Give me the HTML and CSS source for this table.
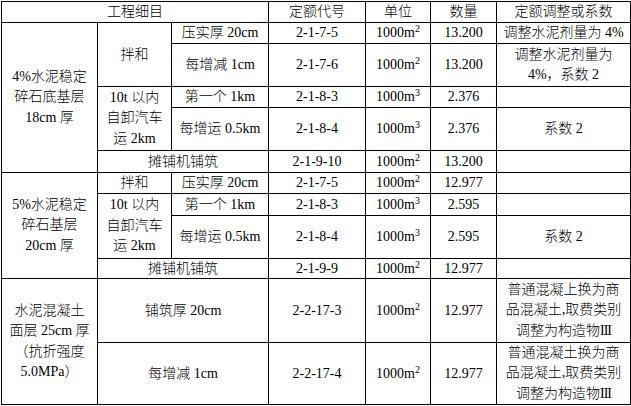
FILE: index.html
```html
<!DOCTYPE html>
<html lang="zh-CN">
<head>
<meta charset="utf-8">
<title>工程细目</title>
<link rel="stylesheet" href="styles.css">
</head>
<body>
<div class="sheet">
  <div class="c span-c3"><span>工程细目</span></div>
  <div class="c"><span>定额代号</span></div>
  <div class="c"><span>单位</span></div>
  <div class="c"><span>数量</span></div>
  <div class="c"><span>定额调整或系数</span></div>

  <div class="c span-r5 multi"><span>4%水泥稳定<br>碎石底基层<br>18cm 厚</span></div>
  <div class="c span-r2"><span>拌和</span></div>
  <div class="c"><span>压实厚 20cm</span></div>
  <div class="c"><span>2-1-7-5</span></div>
  <div class="c"><span>1000m<sup>2</sup></span></div>
  <div class="c"><span>13.200</span></div>
  <div class="c"><span>调整水泥剂量为 4%</span></div>

  <div class="c"><span>每增减 1cm</span></div>
  <div class="c"><span>2-1-7-6</span></div>
  <div class="c"><span>1000m<sup>2</sup></span></div>
  <div class="c"><span>13.200</span></div>
  <div class="c multi"><span>调整水泥剂量为<br>4%，系数 2</span></div>

  <div class="c span-r2 multi"><span>10t 以内<br>自卸汽车<br>运 2km</span></div>
  <div class="c"><span>第一个 1km</span></div>
  <div class="c"><span>2-1-8-3</span></div>
  <div class="c"><span>1000m<sup>3</sup></span></div>
  <div class="c"><span>2.376</span></div>
  <div class="c"></div>

  <div class="c"><span>每增运 0.5km</span></div>
  <div class="c"><span>2-1-8-4</span></div>
  <div class="c"><span>1000m<sup>3</sup></span></div>
  <div class="c"><span>2.376</span></div>
  <div class="c"><span>系数 2</span></div>

  <div class="c span-c2"><span>摊铺机铺筑</span></div>
  <div class="c"><span>2-1-9-10</span></div>
  <div class="c"><span>1000m<sup>2</sup></span></div>
  <div class="c"><span>13.200</span></div>
  <div class="c"></div>

  <div class="c span-r4 multi"><span>5%水泥稳定<br>碎石基层<br>20cm 厚</span></div>
  <div class="c"><span>拌和</span></div>
  <div class="c"><span>压实厚 20cm</span></div>
  <div class="c"><span>2-1-7-5</span></div>
  <div class="c"><span>1000m<sup>2</sup></span></div>
  <div class="c"><span>12.977</span></div>
  <div class="c"></div>

  <div class="c span-r2 multi"><span>10t 以内<br>自卸汽车<br>运 2km</span></div>
  <div class="c"><span>第一个 1km</span></div>
  <div class="c"><span>2-1-8-3</span></div>
  <div class="c"><span>1000m<sup>3</sup></span></div>
  <div class="c"><span>2.595</span></div>
  <div class="c"></div>

  <div class="c"><span>每增运 0.5km</span></div>
  <div class="c"><span>2-1-8-4</span></div>
  <div class="c"><span>1000m<sup>3</sup></span></div>
  <div class="c"><span>2.595</span></div>
  <div class="c"><span>系数 2</span></div>

  <div class="c span-c2"><span>摊铺机铺筑</span></div>
  <div class="c"><span>2-1-9-9</span></div>
  <div class="c"><span>1000m<sup>2</sup></span></div>
  <div class="c"><span>12.977</span></div>
  <div class="c"></div>

  <div class="c span-r2 multi"><span>水泥混凝土<br>面层 25cm 厚<br>（抗折强度<br>5.0MPa）</span></div>
  <div class="c span-c2"><span>铺筑厚 20cm</span></div>
  <div class="c"><span>2-2-17-3</span></div>
  <div class="c"><span>1000m<sup>2</sup></span></div>
  <div class="c"><span>12.977</span></div>
  <div class="c multi"><span>普通混凝上换为商<br>品混凝土,取费类别<br>调整为构造物<span class="roman">III</span></span></div>

  <div class="c span-c2"><span>每增减 1cm</span></div>
  <div class="c"><span>2-2-17-4</span></div>
  <div class="c"><span>1000m<sup>2</sup></span></div>
  <div class="c"><span>12.977</span></div>
  <div class="c multi"><span>普通混凝土换为商<br>品混凝土,取费类别<br>调整为构造物<span class="roman">III</span></span></div>
</div>
</body>
</html>
```

FILE: styles.css
```css
html, body {
  margin: 0;
  padding: 0;
  background: #fff;
}

body {
  font-family: "Liberation Serif", "Noto Sans CJK SC", serif;
  font-size: 14px;
  font-weight: 300;
  color: #000;
}

.sheet {
  display: grid;
  grid-template-columns: 95px 73px 96px 96px 64px 65px 133px;
  grid-template-rows: 20px 20px 42px 20px 42px 21px 20px 21px 42px 19px 63px 61px;
  gap: 1px;
  padding: 1px;
  background: #000;
  width: max-content;
  margin: 1px 0 0 1px;
}

.c {
  background: #fff;
  display: flex;
  align-items: center;
  justify-content: center;
  text-align: center;
  line-height: 20px;
  white-space: nowrap;
  overflow: hidden;
}

.multi {
  line-height: 20.5px;
}

.span-c2 { grid-column: span 2; }
.span-c3 { grid-column: span 3; }
.span-r2 { grid-row: span 2; }
.span-r4 { grid-row: span 4; }
.span-r5 { grid-row: span 5; }

sup {
  font-size: 10px;
  line-height: 0;
  vertical-align: 5px;
}

.roman {
  letter-spacing: -1px;
}
```
